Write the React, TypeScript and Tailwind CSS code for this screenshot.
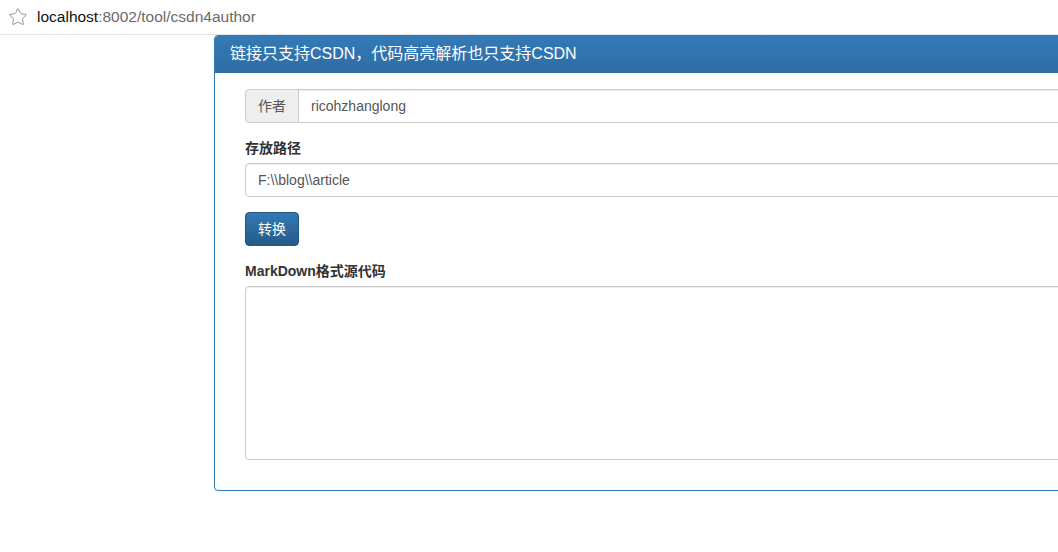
import { Star } from "lucide-react";

const font = { fontFamily: '"Liberation Sans", "Noto Sans CJK SC", sans-serif' };

export default function App() {
  return (
    <div className="h-[552px] w-[1058px] overflow-hidden bg-white text-[14px] text-[#333]" style={font}>
      <div className="flex h-[35px] items-center border-b border-[#e4e4e4] bg-white pl-[8px]">
        <Star className="h-[20px] w-[20px] text-[#8a8a8a]" strokeWidth={1.1} />
        <span className="ml-[9px] text-[15.5px] leading-none">
          <span className="text-[#111]">localhost</span>
          <span className="text-[#6a6a6a]">:8002/tool/csdn4author</span>
        </span>
      </div>

      <div className="ml-[214px] w-[900px] rounded-[4px] border border-[#337ab7] shadow-[0_1px_2px_rgba(0,0,0,0.05)]">
        <div className="h-[37px] rounded-t-[3px] bg-gradient-to-b from-[#337ab7] to-[#2e6da4] px-[15px] pt-[8px] text-[16px] leading-[20px] text-white">
          链接只支持CSDN，代码高亮解析也只支持CSDN
        </div>
        <div className="px-[30px] pb-[30px] pt-[16px]">
          <div className="flex h-[34px]">
            <span className="flex items-center rounded-l-[4px] border border-[#ccc] bg-[#eee] px-[12px] text-[#555]">作者</span>
            <input
              readOnly
              value="ricohzhanglong"
              className="flex-1 rounded-r-[4px] border border-l-0 border-[#ccc] px-[12px] text-[14px] text-[#555] shadow-[inset_0_1px_1px_rgba(0,0,0,0.075)] outline-none"
              style={font}
            />
          </div>

          <label className="mt-[15px] mb-[5px] block font-bold leading-[20px]">存放路径</label>
          <input
            readOnly
            value="F:\\blog\\article"
            className="block h-[34px] w-full rounded-[4px] border border-[#ccc] px-[12px] text-[14px] text-[#555] shadow-[inset_0_1px_1px_rgba(0,0,0,0.075)] outline-none"
            style={font}
          />

          <button
            className="mt-[15px] block h-[34px] rounded-[4px] border border-[#245580] bg-gradient-to-b from-[#337ab7] to-[#265a88] px-[12px] leading-[20px] text-white"
            style={font}
          >
            转换
          </button>

          <label className="mt-[15px] mb-[5px] block font-bold leading-[20px]">MarkDown格式源代码</label>
          <textarea
            readOnly
            className="block h-[174px] w-full resize-none rounded-[4px] border border-[#ccc] px-[12px] py-[6px] shadow-[inset_0_1px_1px_rgba(0,0,0,0.075)] outline-none"
          />
        </div>
      </div>
    </div>
  );
}
